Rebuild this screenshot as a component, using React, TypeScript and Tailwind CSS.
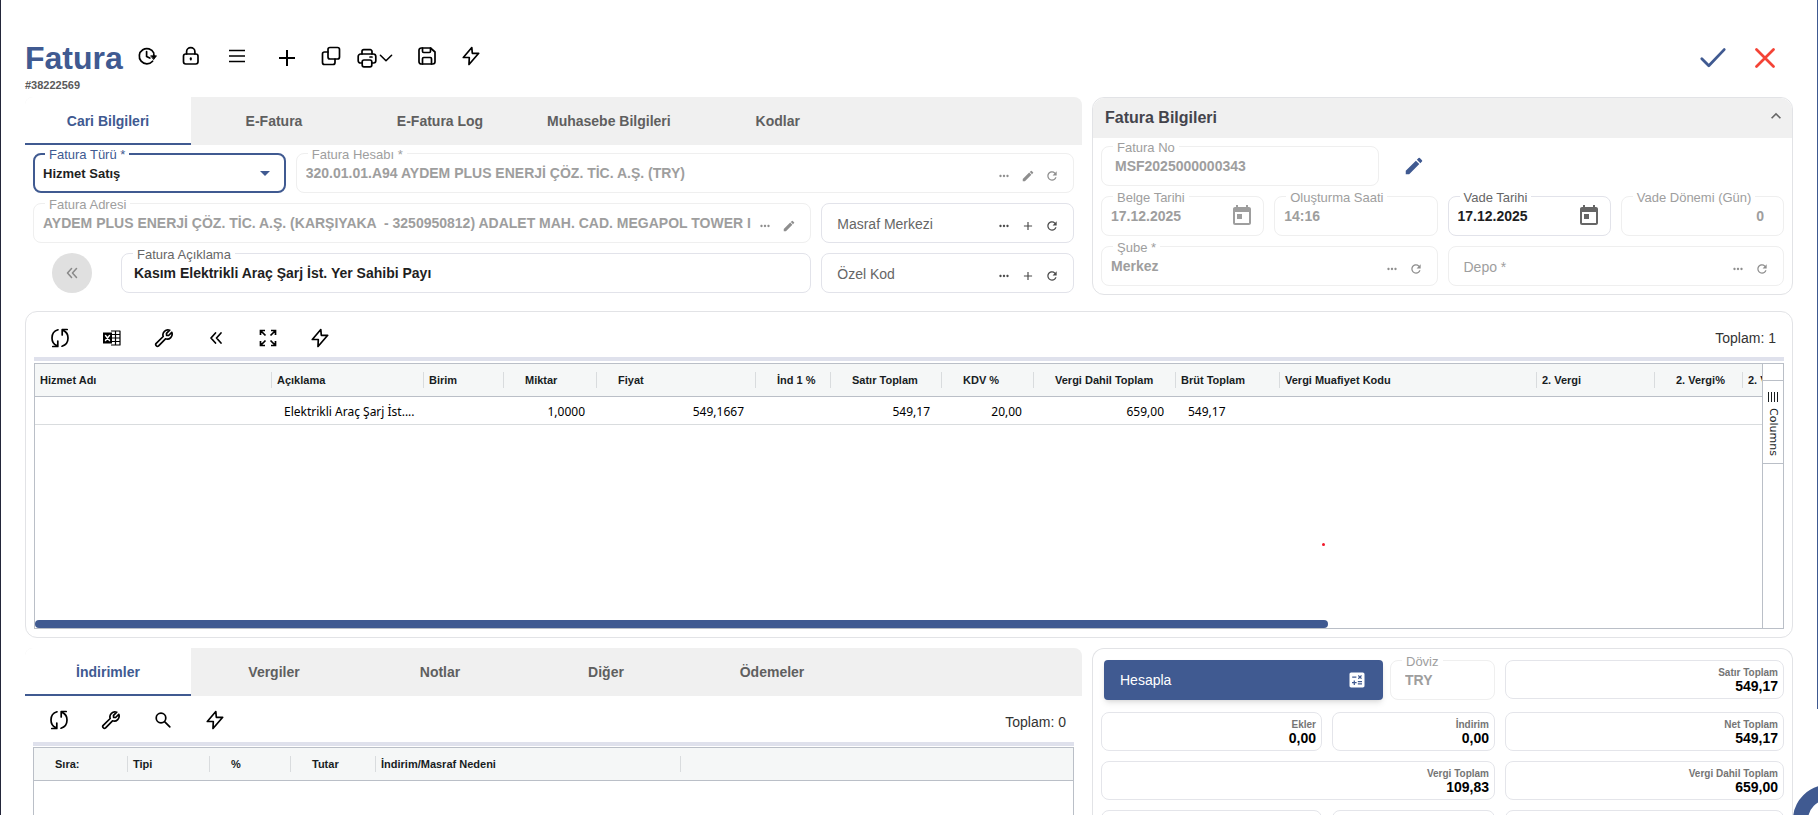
import React, { useState } from 'react';
import {
  MdAdd,
  MdCalculate,
  MdEdit,
  MdKeyboardArrowUp,
  MdMoreHoriz,
  MdRefresh,
  MdToday,
} from 'react-icons/md';

type IconProps = { className?: string };

type FieldProps = {
  id: string;
  label: string;
  value?: string;
  disabled?: boolean;
  className?: string;
  inputClassName?: string;
  children?: React.ReactNode;
};

type Column = {
  title: string;
  width: number;
  indent?: boolean;
  value?: string;
  right?: boolean;
};

function Svg({ className = 'size-5', children }: IconProps & { children: React.ReactNode }) {
  return (
    <svg
      viewBox="0 0 20 20"
      className={className}
      fill="none"
      stroke="currentColor"
      strokeWidth="1.7"
      strokeLinecap="round"
      strokeLinejoin="round"
      aria-hidden="true"
    >
      {children}
    </svg>
  );
}

const ClockIcon = () => (
  <Svg>
    <path d="M15.6 15.2A7.6 7.6 0 1 1 16.800 7" />
    <path d="M9.6 5.500v5l3.200 1.600" />
    <path d="M14 9.800h5.500l-2.700 3.600z" fill="currentColor" strokeWidth="0.8" />
    <path d="M17 10.500c.1-1 0-1.600-.3-2.500" />
  </Svg>
);

const LockIcon = () => (
  <Svg>
    <rect x="2.500" y="8" width="14.500" height="10" rx="2.200" />
    <path d="M5.600 8V5.800a4.100 4.100 0 0 1 8.300 0V8" />
    <path d="M9.800 12.200v1.400" strokeWidth="2" />
  </Svg>
);

const MenuIcon = () => (
  <Svg>
    <path d="M2 4.500h16M2 10h16M2 15.500h16" strokeLinecap="butt" />
  </Svg>
);

const PlusIcon = () => (
  <Svg>
    <path d="M10 2v16M2 10h16" strokeLinecap="butt" strokeWidth="2" />
  </Svg>
);

const CopyIcon = () => (
  <Svg>
    <rect x="7" y="1.500" width="11.500" height="11.500" rx="2" />
    <path d="M7 6H3.500a2 2 0 0 0-2 2v8.500a2 2 0 0 0 2 2H12a2 2 0 0 0 2-2V13" />
  </Svg>
);

const PrinterIcon = () => (
  <Svg>
    <path d="M5 6V3.500A1.800 1.800 0 0 1 6.800 1.700h6.400A1.800 1.800 0 0 1 15 3.500V6" />
    <path d="M5.200 15H3.400a2.200 2.200 0 0 1-2.200-2.200V8.500A2.500 2.500 0 0 1 3.700 6h12.600a2.500 2.500 0 0 1 2.500 2.500v4.300a2.200 2.200 0 0 1-2.200 2.200h-1.800" />
    <rect x="5.200" y="12" width="9.600" height="6.800" rx="1.800" />
    <path d="M13 9h2" />
  </Svg>
);

const SaveIcon = () => (
  <Svg>
    <path d="M2 4.200A2.200 2.200 0 0 1 4.200 2h9.300L18 6v9.800a2.200 2.200 0 0 1-2.200 2.200H4.200A2.200 2.200 0 0 1 2 15.800z" />
    <path d="M5.500 2v3.300c0 .7.500 1.200 1.200 1.200h5.600c.7 0 1.200-.5 1.200-1.200V2" />
    <path d="M5.500 18v-5.300c0-.7.500-1.200 1.200-1.200h6.600c.7 0 1.200.5 1.200 1.200V18" />
  </Svg>
);

const BoltIcon = () => (
  <Svg>
    <path d="M10.800 1.500 2.300 11.500h6L8 18.500l9.700-11.200h-6.400z" />
  </Svg>
);

const SyncIcon = () => (
  <Svg>
    <path d="M8 1.800C4.500 2.800 2 6 2 10c0 3.500 1.800 6.300 4.700 7.600" />
    <path d="M2.800 18.500h5v-5.500" />
    <path d="M12 18.200c3.500-1 6-4.200 6-8.200 0-3.500-1.800-6.300-4.700-7.600" />
    <path d="M17.200 1.500h-5v5.500" />
  </Svg>
);

const ExcelIcon = () => (
  <Svg>
    <path d="M9 3h9v14H9M9 6.500h9M9 10h9M9 13.500h9M13.500 3v14" strokeWidth="1.200" strokeLinecap="butt" />
    <rect x="1" y="4.500" width="9" height="11" fill="currentColor" stroke="none" />
    <path d="m3.500 7.500 4 5M7.500 7.500l-4 5" stroke="white" strokeWidth="1.400" />
  </Svg>
);

const WrenchIcon = () => (
  <Svg>
    <path d="M15.700 2.200a5 5 0 0 0-6.500 6.300l-7 6.900a1.700 1.700 0 0 0 2.400 2.400l6.900-7a5 5 0 0 0 6.300-6.500l-3.200 3.200-2-.1-.1-2z" />
  </Svg>
);

const DoubleLeftIcon = ({ className }: IconProps) => (
  <Svg className={className}>
    <path d="m9.500 5-4.500 5 4.500 5M15 5l-4.500 5 4.500 5" />
  </Svg>
);

const ExpandIcon = () => (
  <Svg>
    <path
      d="M2.500 7V2.500H7M2.500 2.500l5 5M13 2.500h4.500V7M17.500 2.500l-5 5M2.500 13v4.500H7M2.500 17.500l5-5M13 17.500h4.500V13M17.500 17.500l-5-5"
      strokeLinecap="butt"
      strokeLinejoin="miter"
    />
  </Svg>
);

const SearchIcon = () => (
  <Svg>
    <circle cx="8" cy="8" r="4.800" />
    <path d="m11.800 11.800 5 5" />
  </Svg>
);

function ToolButton({ label, className = 'w-11', children }: { label: string; className?: string; children: React.ReactNode }) {
  return (
    <button aria-label={label} className={`flex h-9 shrink-0 cursor-pointer items-center justify-center ${className}`}>
      {children}
    </button>
  );
}

function Field({ id, label, value = '', disabled, className = '', inputClassName = 'pl-[9px]', children }: FieldProps) {
  return (
    <div
      className={`relative flex h-10 items-center rounded-lg border ${
        disabled ? 'border-[#efefef] text-[#9e9e9e]' : 'border-[#e2e3ea] text-[#666]'
      } ${className}`}
    >
      <label htmlFor={id} className="absolute -top-[7px] left-[11px] bg-white px-1 text-[13px] leading-4 whitespace-nowrap">
        {label}
      </label>
      <input
        id={id}
        defaultValue={value}
        disabled={disabled}
        className={`h-full w-full min-w-0 flex-1 bg-transparent text-sm font-bold outline-none ${
          disabled ? 'text-[#9e9e9e]' : 'text-[#1f1f1f]'
        } ${inputClassName}`}
      />
      {children}
    </div>
  );
}

function EmptyField({ id, label, disabled, children }: FieldProps) {
  return (
    <div className={`flex h-10 items-center rounded-lg border ${disabled ? 'border-[#efefef]' : 'border-[#e2e3ea]'}`}>
      <label htmlFor={id} className="sr-only">
        {label}
      </label>
      <input
        id={id}
        placeholder={label}
        disabled={disabled}
        className={`h-full w-full min-w-0 flex-1 bg-transparent pt-0.5 pl-[15px] text-sm outline-none ${
          disabled ? 'placeholder:text-[#9e9e9e]' : 'placeholder:text-[#666]'
        }`}
      />
      {children}
    </div>
  );
}

function FieldActions({ edit, add, refresh, disabled }: { edit?: boolean; add?: boolean; refresh?: boolean; disabled?: boolean }) {
  return (
    <div className={`flex shrink-0 items-center gap-2.5 pt-[5px] pr-3.5 ${disabled ? 'text-[#8e8e8e]' : 'text-[#4a4a4a]'}`}>
      <button aria-label="Seç">
        <MdMoreHoriz className="size-3.5" />
      </button>
      {edit && (
        <button aria-label="Düzenle">
          <MdEdit className="size-3.5" />
        </button>
      )}
      {add && (
        <button aria-label="Ekle">
          <MdAdd className="size-3.5" />
        </button>
      )}
      {refresh && (
        <button aria-label="Yenile">
          <MdRefresh className="size-3.5" />
        </button>
      )}
    </div>
  );
}

function Tabs({ items }: { items: string[] }) {
  const [active, setActive] = useState(0);

  return (
    <div role="tablist" className="flex h-12 shrink-0 overflow-hidden rounded-t-lg bg-[#f0f0f0]">
      {items.map((item, i) => (
        <button
          key={item}
          role="tab"
          aria-selected={i === active}
          onClick={() => setActive(i)}
          className={`min-w-[166px] cursor-pointer px-6 text-sm font-bold ${
            i === active ? 'border-b-2 border-[#405a91] bg-white pt-0.5 text-[#405a91]' : 'text-[#5f5f5f]'
          }`}
        >
          {item}
        </button>
      ))}
    </div>
  );
}

function DataGrid({ columns, hasRow }: { columns: Column[]; hasRow?: boolean }) {
  return (
    <table className="w-full table-fixed border-collapse text-left">
      <colgroup>
        {columns.map((col, i) => (
          <col key={i} style={i < columns.length - 1 ? { width: col.width } : undefined} />
        ))}
      </colgroup>
      <thead className="bg-[#f5f7f7]">
        <tr className="h-8 border-b border-[#babfc7]">
          {columns.map((col, i) => (
            <th key={i} className="p-0 text-[11px] font-bold text-[#181d1f]">
              <div
                className={`flex h-4 items-center overflow-hidden whitespace-nowrap ${col.indent ? 'pl-[21px]' : 'pl-[5px]'} ${
                  i < columns.length - 1 ? 'border-r border-[#d9dcde]' : ''
                }`}
              >
                {col.title}
              </div>
            </th>
          ))}
        </tr>
      </thead>
      {hasRow && (
        <tbody>
          <tr className="h-7 border-b border-[#d9dcde]">
            {columns.map((col, i) => (
              <td
                key={i}
                className={`overflow-hidden px-3 pt-1 pb-0 font-['Noto_Sans','Open_Sans',sans-serif] text-[12px] leading-4 whitespace-nowrap text-black ${
                  col.right ? 'text-right' : ''
                }`}
              >
                {col.value}
              </td>
            ))}
          </tr>
        </tbody>
      )}
    </table>
  );
}

function TotalCard({ label, value, className = '' }: { label?: string; value?: string; className?: string }) {
  return (
    <div className={`flex h-[39px] min-w-0 flex-col items-end justify-center rounded-lg border border-[#e4e5ea] pr-[5px] ${className}`}>
      <span className="text-[10px] leading-3 font-bold text-[#757575]">{label}</span>
      <span className="text-sm leading-[14px] font-bold text-black">{value}</span>
    </div>
  );
}

const lineColumns: Column[] = [
  { title: 'Hizmet Adı', width: 237 },
  { title: 'Açıklama', width: 152, value: 'Elektrikli Araç Şarj İst....' },
  { title: 'Birim', width: 80 },
  { title: 'Miktar', width: 93, indent: true, value: '1,0000', right: true },
  { title: 'Fiyat', width: 159, indent: true, value: '549,1667', right: true },
  { title: 'İnd 1 %', width: 75, indent: true },
  { title: 'Satır Toplam', width: 111, indent: true, value: '549,17', right: true },
  { title: 'KDV %', width: 92, indent: true, value: '20,00', right: true },
  { title: 'Vergi Dahil Toplam', width: 142, indent: true, value: '659,00', right: true },
  { title: 'Brüt Toplam', width: 104, value: '549,17' },
  { title: 'Vergi Muafiyet Kodu', width: 257 },
  { title: '2. Vergi', width: 118 },
  { title: '2. Vergi%', width: 88, indent: true },
  { title: '2. V', width: 20 },
];

const discountColumns: Column[] = [
  { title: 'Sıra:', width: 94, indent: true },
  { title: 'Tipi', width: 82 },
  { title: '%', width: 81, indent: true },
  { title: 'Tutar', width: 85, indent: true },
  { title: 'İndirim/Masraf Nedeni', width: 305 },
  { title: '', width: 392 },
];

export default function App() {
  return (
    <div className="relative flex h-screen flex-col overflow-hidden border-l border-[#23263a] bg-white pr-[25px] pl-6 font-['Liberation_Sans',Arial,sans-serif]">
      <header className="flex h-[97px] shrink-0 items-start justify-between pt-[38px]">
        <div>
          <div className="flex h-10 items-center">
            <h1 className="w-[100px] text-[32px] leading-10 font-bold text-[#405a91]">Fatura</h1>
            <div className="flex items-center pb-1 text-black">
              <ToolButton label="Geçmiş"><ClockIcon /></ToolButton>
              <ToolButton label="Kilitle"><LockIcon /></ToolButton>
              <ToolButton label="Menü" className="w-12"><MenuIcon /></ToolButton>
              <ToolButton label="Yeni" className="w-[52px] pt-1"><PlusIcon /></ToolButton>
              <ToolButton label="Kopyala" className="w-9"><CopyIcon /></ToolButton>
              <ToolButton label="Yazdır" className="w-14 gap-0.5 pt-1 pr-1">
                <PrinterIcon />
                <Svg className="size-3.5">
                  <path d="m2 6 8 8 8-8" strokeWidth="2.200" />
                </Svg>
              </ToolButton>
              <ToolButton label="Kaydet"><SaveIcon /></ToolButton>
              <ToolButton label="İşlemler"><BoltIcon /></ToolButton>
            </div>
          </div>
          <p className="pt-px text-[11px] leading-3 font-bold text-[#5a5a5a]">#38222569</p>
        </div>
        <div className="flex h-10 items-center pr-0.5">
          <ToolButton label="Onayla" className="w-[52px] text-[#405a91]">
            <Svg className="size-7">
              <path d="m2 10.500 5 5L18 4" strokeWidth="2" />
            </Svg>
          </ToolButton>
          <ToolButton label="Kapat" className="w-[52px] text-[#f44336]">
            <Svg>
              <path d="m1.500 1.500 17 17M18.500 1.500l-17 17" strokeWidth="2.700" />
            </Svg>
          </ToolButton>
        </div>
      </header>

      <div className="grid shrink-0 grid-cols-[minmax(0,1057fr)_minmax(0,701fr)] gap-2.5">
        <section>
          <Tabs items={['Cari Bilgileri', 'E-Fatura', 'E-Fatura Log', 'Muhasebe Bilgileri', 'Kodlar']} />
          <div className="grid grid-cols-4 gap-2.5 px-2 pt-2">
            <div className="relative h-10 rounded-lg border-2 border-[#405a91]">
              <label htmlFor="type" className="absolute -top-2 left-2.5 bg-white px-1 text-[13px] leading-4 text-[#405a91]">
                Fatura Türü *
              </label>
              <select
                id="type"
                className="h-full w-full appearance-none bg-transparent pt-0.5 pl-2 text-[13px] font-bold text-[#1f1f1f] outline-none"
              >
                <option>Hizmet Satış</option>
              </select>
              <svg viewBox="0 0 10 5" className="pointer-events-none absolute top-4 right-3.5 h-[5px] w-2.5 fill-[#405a91]">
                <path d="M0 0h10L5 5z" />
              </svg>
            </div>
            <Field id="account" label="Fatura Hesabı *" value="320.01.01.A94 AYDEM PLUS ENERJİ ÇÖZ. TİC. A.Ş. (TRY)" disabled className="col-span-3">
              <FieldActions edit refresh disabled />
            </Field>
            <Field
              id="address"
              label="Fatura Adresi"
              value="AYDEM PLUS ENERJİ ÇÖZ. TİC. A.Ş. (KARŞIYAKA  - 3250950812) ADALET MAH. CAD. MEGAPOL TOWER I"
              disabled
              className="col-span-3"
            >
              <FieldActions edit disabled />
            </Field>
            <EmptyField id="cost" label="Masraf Merkezi">
              <FieldActions add refresh />
            </EmptyField>
            <div className="col-span-3 flex">
              <div className="w-[88px] shrink-0 pl-[19px]">
                <button aria-label="Geri" className="flex size-10 items-center justify-center rounded-full bg-[#e0e0e0] text-[#8a8a8a]">
                  <DoubleLeftIcon className="size-[18px]" />
                </button>
              </div>
              <Field id="desc" label="Fatura Açıklama" value="Kasım Elektrikli Araç Şarj İst. Yer Sahibi Payı" className="flex-1" inputClassName="pl-3" />
            </div>
            <EmptyField id="code" label="Özel Kod">
              <FieldActions add refresh />
            </EmptyField>
          </div>
        </section>

        <section className="rounded-xl border border-[#e2e3e6]">
          <div className="flex h-10 items-center justify-between rounded-t-xl bg-[#f0f0f0] pr-1.5 pl-3">
            <h2 className="text-base font-bold text-[#44444c]">Fatura Bilgileri</h2>
            <button aria-label="Daralt" className="pb-1 text-[#666]">
              <MdKeyboardArrowUp className="size-5" />
            </button>
          </div>
          <div className="grid grid-cols-4 gap-2.5 p-2">
            <div className="col-span-4 flex items-center gap-6">
              <Field id="no" label="Fatura No" value="MSF2025000000343" disabled className="w-[278px]" inputClassName="pl-[13px]" />
              <button aria-label="Fatura No Düzenle" className="text-[#405a91]">
                <MdEdit className="size-[22px]" />
              </button>
            </div>
            <Field id="date" label="Belge Tarihi" value="17.12.2025" disabled>
              <MdToday className="mr-[9px] size-6 shrink-0" />
            </Field>
            <Field id="time" label="Oluşturma Saati" value="14:16" disabled />
            <Field id="due" label="Vade Tarihi" value="17.12.2025">
              <MdToday className="mr-[9px] size-6 shrink-0" />
            </Field>
            <Field id="term" label="Vade Dönemi (Gün)" value="0" disabled inputClassName="pr-[19px] text-right" />
            <Field id="branch" label="Şube *" value="Merkez" disabled className="col-span-2">
              <FieldActions refresh disabled />
            </Field>
            <div className="col-span-2">
              <EmptyField id="depot" label="Depo *" disabled>
                <FieldActions refresh disabled />
              </EmptyField>
            </div>
          </div>
        </section>
      </div>

      <section className="mt-4 flex h-[327px] shrink-0 flex-col rounded-xl border border-[#e2e3e6] px-2 pb-2">
        <div className="flex h-[45px] shrink-0 items-center justify-between pt-1.5 pr-2">
          <div className="flex">
            <ToolButton label="Yenile" className="w-[52px]"><SyncIcon /></ToolButton>
            <ToolButton label="Excel" className="w-[52px]"><ExcelIcon /></ToolButton>
            <ToolButton label="Ayarlar" className="w-[52px]"><WrenchIcon /></ToolButton>
            <ToolButton label="Daralt" className="w-[52px]"><DoubleLeftIcon /></ToolButton>
            <ToolButton label="Tam Ekran" className="w-[52px]"><ExpandIcon /></ToolButton>
            <ToolButton label="İşlemler" className="w-[52px]"><BoltIcon /></ToolButton>
          </div>
          <span className="text-sm text-[#333]">Toplam: 1</span>
        </div>
        <div className="mb-0.5 h-1 shrink-0 bg-[#dfe1ec]" />
        <div className="flex min-h-0 flex-1 border border-[#babfc7]">
          <div className="relative flex min-w-0 flex-1 flex-col justify-between overflow-hidden">
            <DataGrid columns={lineColumns} hasRow />
            <div className="h-2 w-[87%] max-w-[1293px] rounded-full bg-[#405a91]" />
            <span className="absolute top-[179px] left-[1287px] size-[3px] rounded-full bg-[#f0182a]" />
          </div>
          <div className="flex w-[21px] shrink-0 flex-col border-l border-[#babfc7] pt-4">
            <button className="flex h-[84px] flex-col items-center gap-1.5 border-y border-[#babfc7] pt-[11px] font-['DejaVu_Sans','Noto_Sans',sans-serif] text-[11px] text-[#181d1f]">
              <svg viewBox="0 0 10 10" className="h-2.5 w-2.5 shrink-0" stroke="currentColor" strokeWidth="1">
                <path d="M.5 0v10M3.500 0v10M6.500 0v10M9.500 0v10" />
              </svg>
              <span className="leading-4 [writing-mode:vertical-rl]">Columns</span>
            </button>
          </div>
        </div>
      </section>

      <div className="mt-2.5 grid min-h-0 flex-1 grid-cols-[minmax(0,1057fr)_minmax(0,701fr)] gap-2.5">
        <section className="flex min-h-0 flex-col">
          <Tabs items={['İndirimler', 'Vergiler', 'Notlar', 'Diğer', 'Ödemeler']} />
          <div className="flex min-h-0 flex-1 flex-col px-2">
            <div className="flex h-[46px] shrink-0 items-center justify-between pt-0.5 pr-2">
              <div className="flex">
                <ToolButton label="Yenile" className="w-[52px]"><SyncIcon /></ToolButton>
                <ToolButton label="Ayarlar" className="w-[52px]"><WrenchIcon /></ToolButton>
                <ToolButton label="Ara" className="w-[52px]"><SearchIcon /></ToolButton>
                <ToolButton label="İşlemler" className="w-[52px]"><BoltIcon /></ToolButton>
              </div>
              <span className="pt-1 text-sm text-[#333]">Toplam: 0</span>
            </div>
            <div className="mb-px h-1 shrink-0 bg-[#dfe1ec]" />
            <div className="flex-1 border border-b-0 border-[#babfc7]">
              <DataGrid columns={discountColumns} />
            </div>
          </div>
        </section>

        <section className="min-h-0 overflow-hidden rounded-t-xl border border-b-0 border-[#e2e3e6] px-2 pt-[11px]">
          <div className="grid grid-cols-[minmax(0,221fr)_minmax(0,163fr)_minmax(0,279fr)] gap-2.5">
            <div className="col-span-2 mb-0.5 grid grid-cols-[minmax(0,279fr)_minmax(0,105fr)] gap-[7px] pl-[3px]">
              <button className="flex h-10 items-center justify-between rounded bg-[#405a91] px-4 text-sm text-white shadow-md">
                Hesapla
                <MdCalculate className="size-5" />
              </button>
              <Field id="currency" label="Döviz" value="TRY" disabled inputClassName="pl-3.5" />
            </div>
            <TotalCard label="Satır Toplam" value="549,17" />
            <TotalCard label="Ekler" value="0,00" />
            <TotalCard label="İndirim" value="0,00" />
            <TotalCard label="Net Toplam" value="549,17" />
            <TotalCard label="Vergi Toplam" value="109,83" className="col-span-2" />
            <TotalCard label="Vergi Dahil Toplam" value="659,00" />
            <TotalCard />
            <TotalCard />
            <TotalCard />
          </div>
        </section>
      </div>

      <div className="absolute top-0 right-0 h-[709px] w-px bg-[#405a91]" />
      <button aria-label="Yardım" className="absolute -right-[45px] -bottom-10 size-[70px] rounded-full border-[15px] border-[#405a91] bg-white" />
    </div>
  );
}
